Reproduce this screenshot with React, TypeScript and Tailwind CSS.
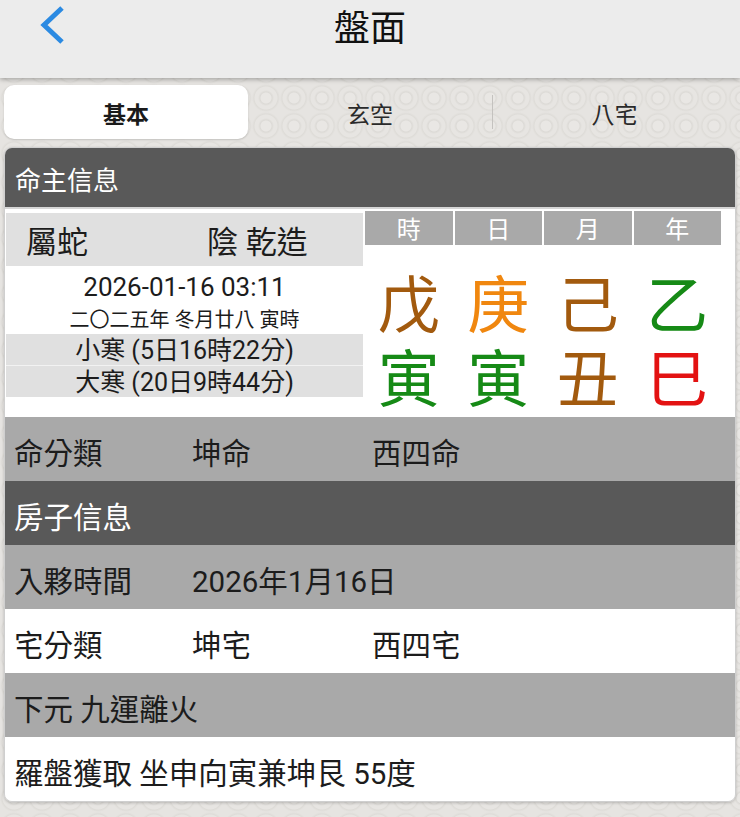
import type { ReactNode } from 'react'

const pillars = [
  { label: '時', stem: '戊', stemColor: 'text-[#a25a0e]', branch: '寅', branchColor: 'text-[#168a16]' },
  { label: '日', stem: '庚', stemColor: 'text-[#f0870f]', branch: '寅', branchColor: 'text-[#168a16]' },
  { label: '月', stem: '己', stemColor: 'text-[#a25a0e]', branch: '丑', branchColor: 'text-[#a25a0e]' },
  { label: '年', stem: '乙', stemColor: 'text-[#168a16]', branch: '巳', branchColor: 'text-[#e31212]' },
]

function BackIcon() {
  return (
    <svg width="28" height="40" viewBox="0 0 28 40" fill="none">
      <path d="M24 3 L6 20 L24 37" stroke="#2b8ae2" strokeWidth="5" strokeLinecap="butt" strokeLinejoin="miter" />
    </svg>
  )
}

interface InfoRowProps {
  tone: 'gray' | 'white' | 'dark'
  cells: string[]
}

function InfoRow({ tone, cells }: InfoRowProps) {
  const bg =
    tone === 'gray' ? 'bg-[#a9a9a9] text-[#1c1c1c]' : tone === 'dark' ? 'bg-[#595959] text-white' : 'bg-white text-[#1c1c1c]'
  return (
    <div className={`flex h-[64px] items-center pt-[11px] pl-[9px] text-[29.5px] ${bg}`}>
      {cells.map((c, i) => (
        <span key={i} className={i < cells.length - 1 ? (i === 0 ? 'w-[178px]' : 'w-[180px]') : ''}>
          {c}
        </span>
      ))}
    </div>
  )
}

function LeftRow({ className, children }: { className: string; children: ReactNode }) {
  return <div className={`flex items-center justify-center ${className}`}>{children}</div>
}

export default function App() {
  return (
    <div className="min-h-[817px] w-full bg-[#e6e4e1] bg-[radial-gradient(circle,#e9e7e4_0px,#e9e7e4_5px,#dcdad6_6px,#e7e5e2_8px,#e7e5e2_11px,#dedcd8_12px,#e6e4e1_14px)] bg-[length:28px_28px] font-['Roboto','Noto_Sans_CJK_TC',sans-serif] leading-none">
      {/* nav bar */}
      <div className="relative z-10 grid h-[78px] grid-cols-[1fr_auto_1fr] items-center bg-[#ececec] shadow-[0_2px_4px_rgba(0,0,0,0.25)]">
        <div className="pb-[28px] pl-[38px]">
          <BackIcon />
        </div>
        <div className="pb-[20px] text-[36px] text-[#111]">盤面</div>
        <div />
      </div>

      {/* tabs */}
      <div className="grid grid-cols-3 px-1 pt-[7px] pb-[8px]">
        <div className="flex h-[54px] items-center justify-center rounded-[10px] bg-white pt-[7px] text-[23px] font-bold text-[#1a1a1a] shadow-[0_1px_2px_rgba(0,0,0,0.15)]">
          基本
        </div>
        <div className="flex h-[54px] items-center justify-center pt-[7px] text-[23px] text-[#2a2a2a]">玄空</div>
        <div className="flex h-[54px] items-center">
          <div className="h-[34px] w-px bg-[#c4c2bf]" />
          <div className="flex flex-1 items-center justify-center pt-[7px] text-[23px] text-[#2a2a2a]">八宅</div>
        </div>
      </div>

      {/* card */}
      <div className="mx-1 overflow-hidden rounded-[8px] border border-[#cfcfcf] shadow-[0_1px_3px_rgba(0,0,0,0.2)]">
        <div className="flex h-[59px] items-center bg-[#595959] pt-[6px] pl-[10px] text-[26px] text-white">命主信息</div>
        <div className="h-[2px] bg-[#d6d6d6]" />

        <div className="flex h-[208px] bg-white">
          {/* left block */}
          <div className="ml-px mt-[4px] flex w-[357px] flex-col">
            <div className="flex h-[53px] items-center bg-[#e0e0e0] pt-[6px] text-[31px] text-[#1c1c1c]">
              <span className="w-[201px] pl-[20px]">屬蛇</span>
              <span>陰 乾造</span>
            </div>
            <LeftRow className="h-[37px] pt-[4px] text-[26px] text-[#1c1c1c]">2026-01-16 03:11</LeftRow>
            <LeftRow className="h-[31px] pt-[2px] text-[20px] text-[#1c1c1c]">二〇二五年 冬月廿八 寅時</LeftRow>
            <LeftRow className="h-[31px] bg-[#e0e0e0] pt-[2px] text-[25px] text-[#1c1c1c]">小寒 (5日16時22分)</LeftRow>
            <div className="h-px bg-[#f2f2f2]" />
            <LeftRow className="h-[31px] bg-[#e0e0e0] pt-[2px] text-[25px] text-[#1c1c1c]">大寒 (20日9時44分)</LeftRow>
          </div>

          {/* pillars */}
          <div className="ml-[2px] mt-[2px] grid w-[356px] grid-cols-4 gap-x-[2px]">
            {pillars.map((p) => (
              <div key={p.label} className="flex flex-col items-center">
                <div className="flex h-[34px] w-full items-center justify-center bg-[#a9a9a9] pt-[3px] text-[24px] text-white">
                  {p.label}
                </div>
                <div className={`mt-[25px] text-[62px] leading-[74px] ${p.stemColor}`}>{p.stem}</div>
                <div className={`text-[62px] leading-[74px] ${p.branchColor}`}>{p.branch}</div>
              </div>
            ))}
          </div>
        </div>

        <InfoRow tone="gray" cells={['命分類', '坤命', '西四命']} />
        <InfoRow tone="dark" cells={['房子信息']} />
        <InfoRow tone="gray" cells={['入夥時間', '2026年1月16日']} />
        <InfoRow tone="white" cells={['宅分類', '坤宅', '西四宅']} />
        <InfoRow tone="gray" cells={['下元 九運離火']} />
        <InfoRow tone="white" cells={['羅盤獲取 坐申向寅兼坤艮 55度']} />
      </div>
    </div>
  )
}
